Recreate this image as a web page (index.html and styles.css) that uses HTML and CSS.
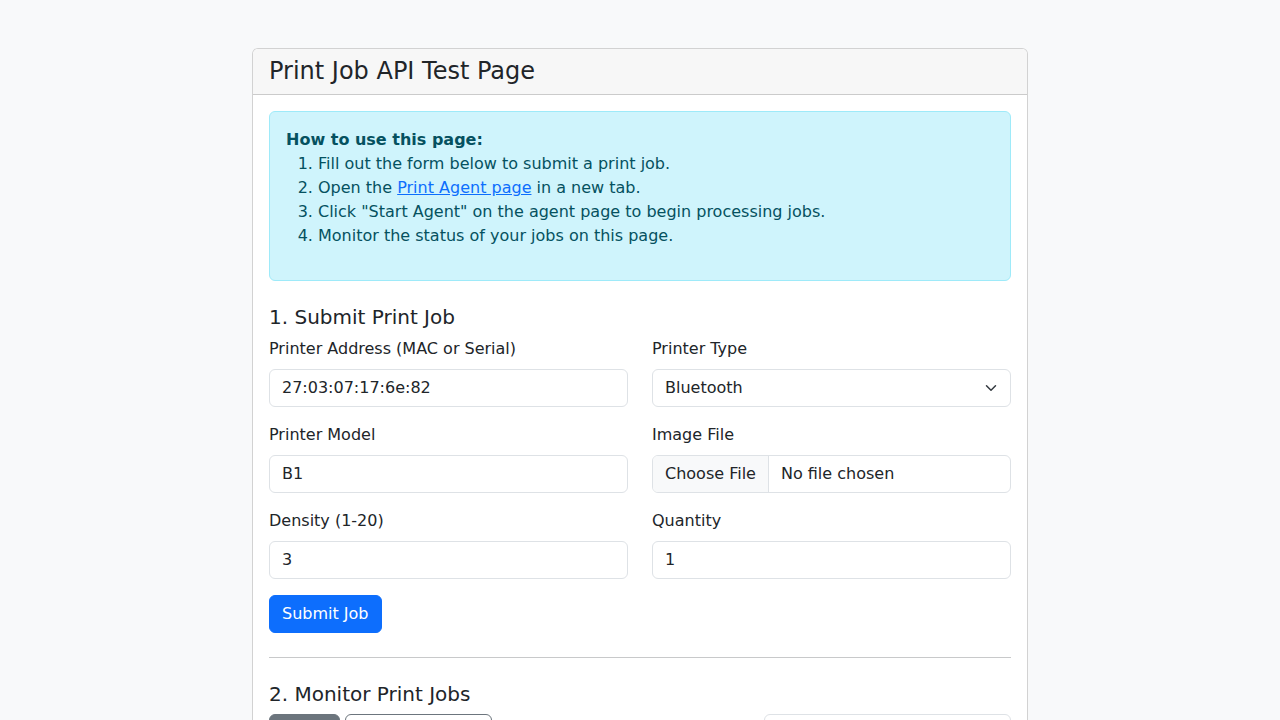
FILE: index.html
```html
<!DOCTYPE html>
<html lang="en">
<head>
<meta charset="utf-8">
<title>Print Job API Test Page</title>
<link rel="stylesheet" href="styles.css">
</head>
<body>
<div class="container">
  <div class="card">
    <div class="card-header">
      <h4 class="card-title">Print Job API Test Page</h4>
    </div>
    <div class="card-body">
      <div class="alert">
        <strong>How to use this page:</strong>
        <ol class="steps">
          <li>Fill out the form below to submit a print job.</li>
          <li>Open the <a href="#">Print Agent page</a> in a new tab.</li>
          <li>Click "Start Agent" on the agent page to begin processing jobs.</li>
          <li>Monitor the status of your jobs on this page.</li>
        </ol>
      </div>

      <h5 class="section-title">1. Submit Print Job</h5>
      <form class="job-form">
        <div class="form-row">
          <div class="field">
            <label class="form-label">Printer Address (MAC or Serial)</label>
            <input class="form-control" type="text" value="27:03:07:17:6e:82">
          </div>
          <div class="field">
            <label class="form-label">Printer Type</label>
            <div class="select-wrap">
              <select class="form-select">
                <option>Bluetooth</option>
                <option>Serial</option>
              </select>
              <svg class="select-arrow" width="16" height="12" viewBox="0 0 16 16" fill="none"><path d="m2 5 6 6 6-6" stroke="#343a40" stroke-width="2" stroke-linecap="round" stroke-linejoin="round"/></svg>
            </div>
          </div>
        </div>
        <div class="form-row">
          <div class="field">
            <label class="form-label">Printer Model</label>
            <input class="form-control" type="text" value="B1">
          </div>
          <div class="field">
            <label class="form-label">Image File</label>
            <label class="form-control file-control">
              <span class="file-button">Choose File</span>
              <span class="file-name">No file chosen</span>
            </label>
          </div>
        </div>
        <div class="form-row">
          <div class="field">
            <label class="form-label">Density (1-20)</label>
            <input class="form-control" type="number" value="3">
          </div>
          <div class="field">
            <label class="form-label">Quantity</label>
            <input class="form-control" type="number" value="1">
          </div>
        </div>
        <button type="button" class="btn btn-primary">Submit Job</button>
      </form>

      <hr class="divider">

      <h5 class="section-title">2. Monitor Print Jobs</h5>
      <div class="toolbar">
        <div class="toolbar-left">
          <button type="button" class="btn btn-secondary">Refresh</button>
          <button type="button" class="btn btn-outline">Auto-refresh: Off</button>
        </div>
        <input class="form-control filter" type="text" placeholder="Filter jobs">
      </div>
    </div>
  </div>
</div>
</body>
</html>
```

FILE: styles.css
```css
* { box-sizing: border-box; }

body {
  margin: 0;
  background: #f8f9fa;
  color: #212529;
  font-family: "DejaVu Sans", sans-serif;
  font-size: 16px;
  line-height: 1.5;
}

.container {
  max-width: 800px;
  margin: 48px auto 0;
  padding: 0 12px;
}

.card {
  background: #fff;
  border: 1px solid rgba(0, 0, 0, 0.175);
  border-radius: 6px;
  overflow: hidden;
}

.card-header {
  background: #f7f7f7;
  border-bottom: 1px solid rgba(0, 0, 0, 0.175);
  padding: 8px 16px;
}

.card-title {
  margin: 0;
  font-size: 24px;
  font-weight: 500;
  line-height: 1.2;
}

.card-body {
  padding: 16px;
}

.alert {
  background: #cff4fc;
  border: 1px solid #9eeaf9;
  color: #055160;
  border-radius: 6px;
  padding: 16px;
  margin-bottom: 24px;
}

.alert strong { font-weight: 700; display: block; }

.steps {
  margin: 0 0 16px;
  padding-left: 32px;
}

.steps a { color: #0d6efd; text-decoration: underline; }

.section-title {
  margin: 0 0 8px;
  font-size: 20px;
  font-weight: 500;
  line-height: 1.2;
}

.form-row {
  display: grid;
  grid-template-columns: 1fr 1fr;
  column-gap: 24px;
  margin-bottom: 16px;
}

.form-label {
  display: inline-block;
  margin-bottom: 8px;
}

.form-control,
.form-select {
  display: block;
  width: 100%;
  height: 38px;
  padding: 6px 12px;
  font-family: inherit;
  font-size: 16px;
  line-height: 1.5;
  color: #212529;
  background: #fff;
  border: 1px solid #dee2e6;
  border-radius: 6px;
}

.select-wrap { position: relative; }

.form-select {
  appearance: none;
  -webkit-appearance: none;
  padding-right: 36px;
}

.select-arrow {
  position: absolute;
  right: 12px;
  top: 13px;
  pointer-events: none;
}

.file-control {
  display: flex;
  align-items: stretch;
  padding: 0;
  overflow: hidden;
}

.file-button {
  display: flex;
  align-items: center;
  padding: 0 12px;
  background: #f8f9fa;
  border-right: 1px solid #dee2e6;
}

.file-name {
  display: flex;
  align-items: center;
  padding: 0 12px;
}

.btn {
  display: inline-block;
  font-family: inherit;
  font-size: 16px;
  line-height: 1.5;
  padding: 6px 12px;
  border: 1px solid transparent;
  border-radius: 6px;
  cursor: pointer;
}

.btn-primary { background: #0d6efd; border-color: #0d6efd; color: #fff; }
.btn-secondary { background: #6c757d; border-color: #6c757d; color: #fff; }
.btn-outline { background: #fff; border-color: #6c757d; color: #6c757d; }

.divider {
  margin: 24px 0;
  border: 0;
  border-top: 1px solid #c8c9ca;
}

.toolbar {
  display: flex;
  justify-content: space-between;
  align-items: center;
}

.toolbar-left {
  display: flex;
  gap: 5px;
}

.toolbar-left .btn-secondary { width: 71px; padding: 6px 0; }
.toolbar-left .btn-outline { width: 147px; padding: 6px 0; white-space: nowrap; overflow: hidden; }

.filter { width: 247px; }
```
